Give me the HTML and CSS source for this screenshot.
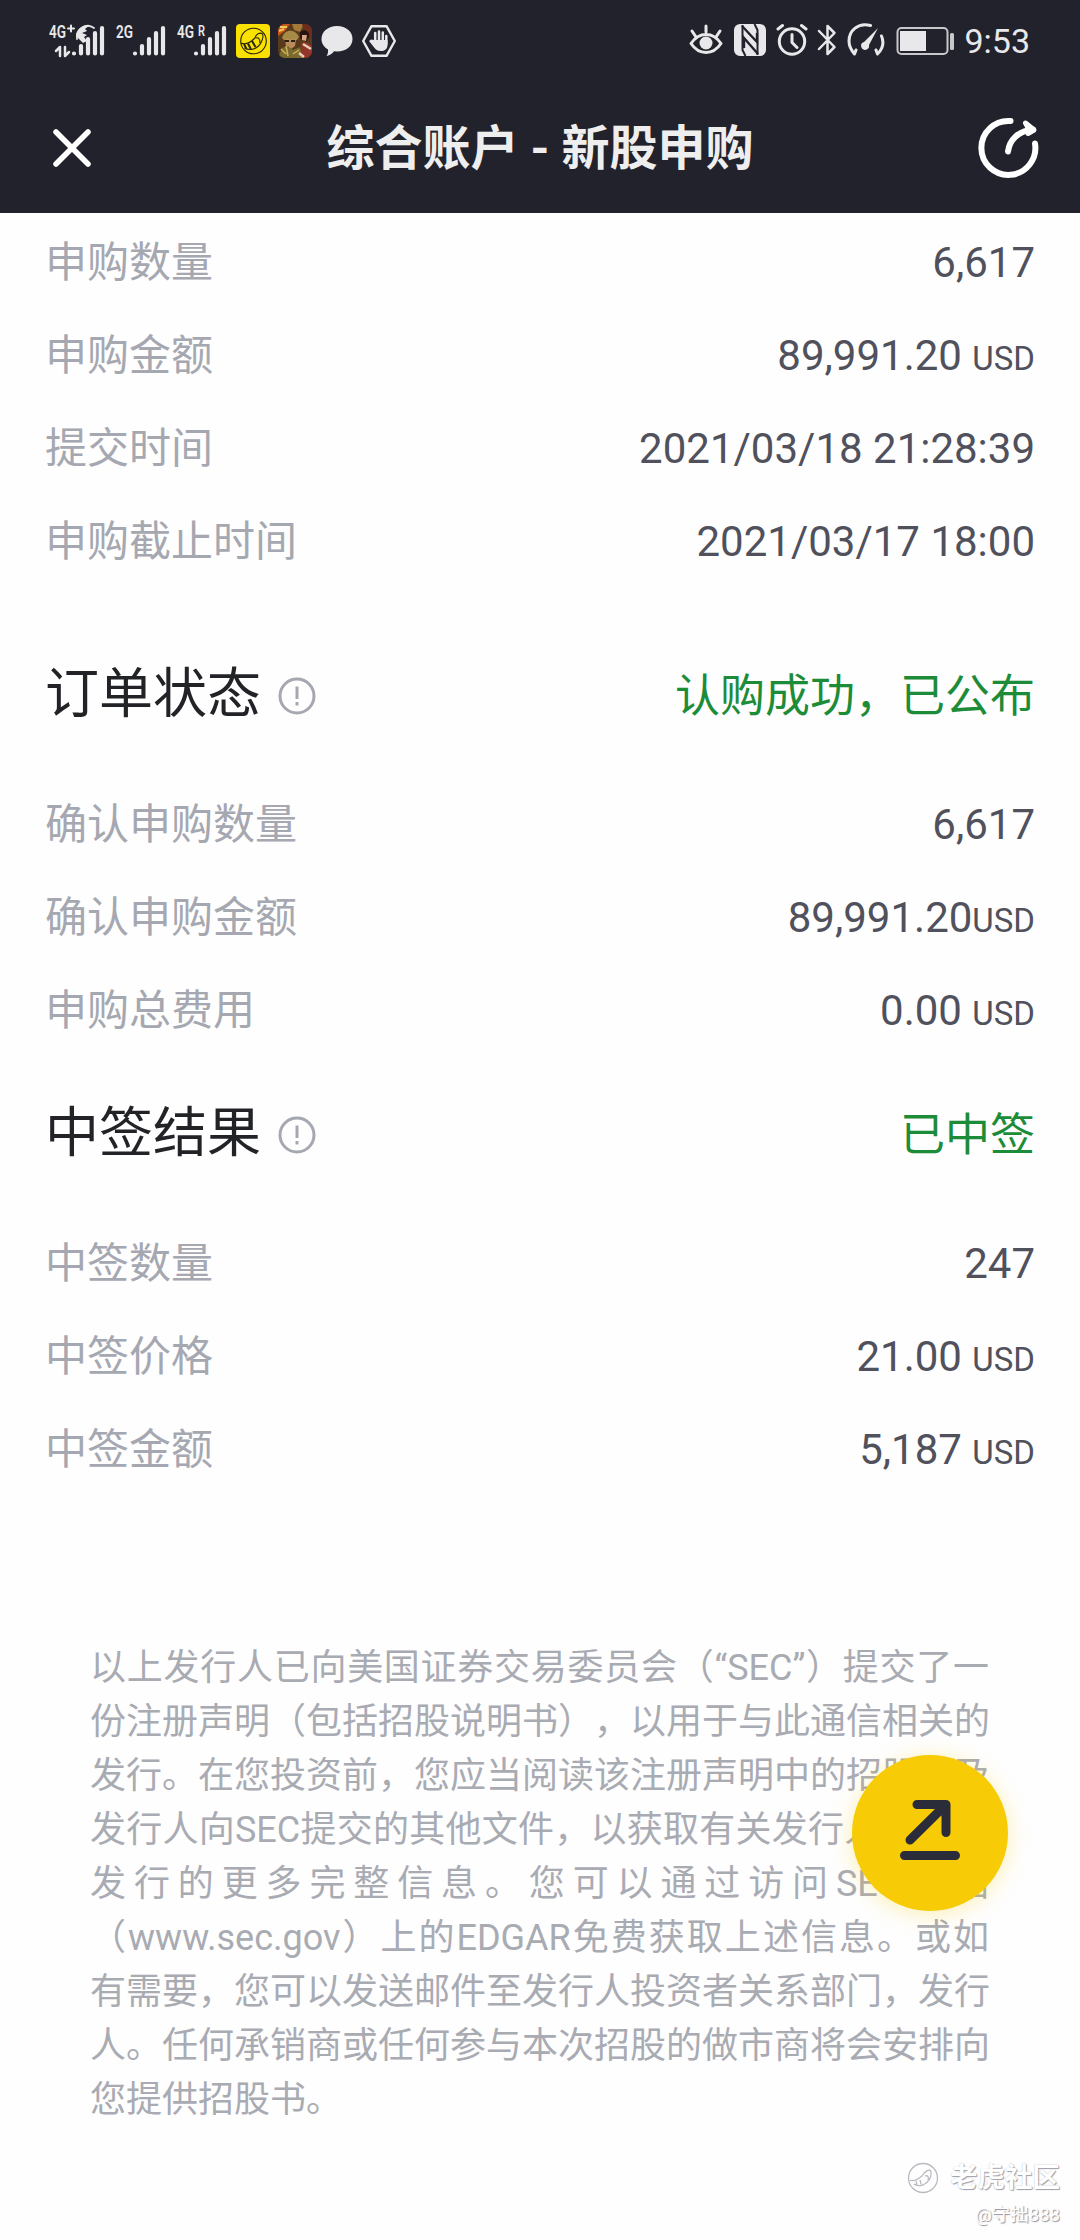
FILE: index.html
```html
<!DOCTYPE html>
<html lang="zh-CN">
<head>
<meta charset="utf-8">
<title>综合账户 - 新股申购</title>
<link rel="stylesheet" href="styles.css">
</head>
<body>
<div class="screen">
  <header class="top">
    <div class="status">
      <div class="status-left">
        <svg class="sig sig-a" width="58" height="42" viewBox="0 -4 58 42">
          <text class="net" x="0" y="14" textLength="17" lengthAdjust="spacingAndGlyphs">4G</text>
          <path class="ln" d="M19 4.500h6M22 1.500v6" stroke-width="2"/>
          <path class="fl" d="M27 12a12 12 0 0 1 14-11l-5 4 2 2-5 2 5 2-3 2 3 4-4 2-4-4z"/>
          <path class="ln" d="M28 15a11 11 0 0 1 17-11" stroke-width="1.800"/>
          <path class="ln" d="M7 27l4-4v9M16 23v9l4-4" stroke-width="2.500"/>
          <path class="ln bars" d="M25 29.500v0M32 22v7.500M39 15v14.500M46 9v20.500M53 4v25.500"/>
        </svg>
        <svg class="sig sig-b" width="52" height="42" viewBox="0 -4 52 42">
          <text class="net" x="0" y="14" textLength="17" lengthAdjust="spacingAndGlyphs">2G</text>
          <path class="ln bars" d="M19 29.500v0M26 22v7.500M33 15v14.500M40 9v20.500M47 4v25.500"/>
        </svg>
        <svg class="sig sig-c" width="52" height="42" viewBox="0 -4 52 42">
          <text class="net" x="0" y="14" textLength="17" lengthAdjust="spacingAndGlyphs">4G</text>
          <text class="net roam" x="21" y="12" textLength="7" lengthAdjust="spacingAndGlyphs">R</text>
          <path class="ln bars" d="M19 29.500v0M26 22v7.500M33 15v14.500M40 9v20.500M47 4v25.500"/>
        </svg>
        <svg class="app-tiger" width="34" height="34" viewBox="0 0 34 34">
          <rect width="34" height="34" rx="4" fill="#fae100"/>
          <g fill="none" stroke="#2a2608" stroke-width="1.100">
            <circle cx="17.500" cy="17" r="12.800"/>
            <path d="M5 19c4 2 9 0 14-5 1-4 5-6 7.500-4 1.500 3-1 9-4 12-4 4-10 4.500-14 2"/>
            <path d="M8 20l2.500 5M12 19.500l3 6M16 17l3.500 6" stroke-width="2"/>
            <path d="M20 14c3-1 4 2 4 5"/>
          </g>
        </svg>
        <svg class="app-game" width="34" height="34" viewBox="0 0 34 34">
          <defs><clipPath id="game"><rect width="34" height="34" rx="7"/></clipPath></defs>
          <g clip-path="url(#game)">
            <rect width="34" height="34" fill="#5a3a1c"/>
            <path d="M0 0h12L7 7 0 12z" fill="#c9571c"/>
            <path d="M2 3l7 0M1 7l5-2" stroke="#f1c75a" stroke-width="2"/>
            <path d="M14 0h12l-4 8-6-2z" fill="#a5793a"/>
            <path d="M24 0h10v14l-8-6z" fill="#6c2d1c"/>
            <path d="M4 14c2-9 13-10 17-1l-2 3H6z" fill="#a58b45"/>
            <path d="M7 15h11l-1 7-4 3-5-3z" fill="#b98c59"/>
            <path d="M7 16h4v2H7zM13 16h4v2h-4z" fill="#2b2016"/>
            <path d="M0 34l4-10 6-2 5 4 7-3 3 11z" fill="#7b6a2d"/>
            <path d="M3 25l5 5M15 30l6-4M8 22l2 10" stroke="#c9b25a" stroke-width="1.500"/>
            <path d="M22 8c4-4 10-1 9 5l-3 5-6-4z" fill="#29150f"/>
            <path d="M24 11l5 0-1 6-4-1z" fill="#d9a582"/>
            <path d="M23 19l5-1 6 4v12H24z" fill="#943627"/>
            <path d="M25 20l8 5M21 29l5 4" stroke="#e8cdb8" stroke-width="2.500"/>
          </g>
        </svg>
        <svg class="bubble" width="32" height="32" viewBox="0 0 32 32">
          <path class="fl" d="M16 1c9 0 15.500 5.500 15.500 13S25 26.500 16 26.500l-3-.2C11 29 8 31 5.500 31c1.500-2 1.700-4 1.500-6.500C3 22 .5 18.500.5 14 .5 6.500 7 1 16 1z"/>
        </svg>
        <svg class="hand" width="36" height="34" viewBox="0 0 36 34">
          <path class="ln" d="M10.500 2.200h15L33.800 17l-8.300 14.800h-15L2.200 17z" stroke-width="2.400"/>
          <path class="ln" d="M14.200 9v9M18 7.500v11M21.800 8.500v9M25.300 12v8" stroke-width="2.500"/>
          <path class="fl" d="M13 16h13.500v5c0 4-3 6-6.500 6-4 0-6-2-8-5l-4-5 2-1.500z"/>
        </svg>
      </div>
      <div class="status-right">
        <svg class="eye" width="34" height="34" viewBox="0 0 34 34">
          <path class="ln" d="M2 19.500c8-12 22-12 30 0-8 12-22 12-30 0zM3 7l4 6M17 2v6M31 7l-4 6" stroke-width="3"/>
          <circle class="fl" cx="17" cy="19" r="6.500"/>
        </svg>
        <svg class="nfc" width="32" height="32" viewBox="0 0 32 32">
          <rect class="fl" width="32" height="32" rx="6"/>
          <path d="M8 2l15 16V9M24 30L10 14v10" fill="none" stroke="#22222c" stroke-width="2.400"/>
          <path d="M8.500 1v25l3 6M23.500 31V6l-3-6" fill="none" stroke="#22222c" stroke-width="2"/>
        </svg>
        <svg class="alarm" width="32" height="34" viewBox="0 0 32 34">
          <circle class="ln" cx="16" cy="18.500" r="12.700" stroke-width="3"/>
          <path class="ln" d="M16 11.500v8l5 5M2 6l4.500-3.500M30 6l-4.500-3.500" stroke-width="3"/>
        </svg>
        <svg class="bt" width="20" height="34" viewBox="0 0 20 34">
          <path class="ln" d="M2 8l15.500 16-7 7V3l7 7L2 26" stroke-width="2.500"/>
        </svg>
        <svg class="gauge" width="38" height="34" viewBox="0 0 38 34">
          <path class="ln" d="M23.500 2.500C11-1 2 8 2 18c0 5 2 9 5.500 13l1.500-4M34.500 13c3 7 1 13-4 18l-1.500-4" stroke-width="3"/>
          <path class="fl" d="M31 5L22 22a4 4 0 1 1-5-3z"/>
        </svg>
        <svg class="battery" width="60" height="30" viewBox="0 0 60 30">
          <rect x="1.500" y="2" width="50" height="26" rx="4" fill="none" stroke="#c8c8cc" stroke-width="2"/>
          <rect class="fl" x="4" y="5" width="26" height="20"/>
          <rect x="54" y="7" width="4" height="17" rx="1.500" fill="#c8c8cc"/>
        </svg>
        <span class="clock">9:53</span>
      </div>
    </div>
    <nav class="bar">
      <svg class="close" width="42" height="42" viewBox="0 0 42 42"><path d="M5 5l32 32M37 5L5 37"/></svg>
      <h1 class="title">综合账户 - 新股申购</h1>
      <svg class="share" width="66" height="66" viewBox="0 0 66 66">
        <path d="M35.500 6A27 27 0 1 0 60 28.500"/>
        <path d="M33 36.500C34.500 25 43 16 58 14.500"/>
        <path class="tip" d="M50.500 8l8.500 7-6 3.500 1-4z"/>
      </svg>
    </nav>
  </header>

  <main class="content">
    <section class="rows">
      <div class="row"><span class="label">申购数量</span><span class="value">6,617</span></div>
      <div class="row"><span class="label">申购金额</span><span class="value">89,991.20 <small>USD</small></span></div>
      <div class="row"><span class="label">提交时间</span><span class="value">2021/03/18 21:28:39</span></div>
      <div class="row"><span class="label">申购截止时间</span><span class="value">2021/03/17 18:00</span></div>
    </section>

    <section class="order">
      <div class="head">
        <h2>订单状态</h2>
        <svg class="info" width="38" height="38" viewBox="0 0 38 38"><circle cx="19" cy="19" r="17"/><path d="M19 9.500v12.500M19 25v3.500"/></svg>
        <span class="state">认购成功，已公布</span>
      </div>
      <div class="row"><span class="label">确认申购数量</span><span class="value">6,617</span></div>
      <div class="row"><span class="label">确认申购金额</span><span class="value">89,991.20<small>USD</small></span></div>
      <div class="row"><span class="label">申购总费用</span><span class="value">0.00 <small>USD</small></span></div>
    </section>

    <section class="result">
      <div class="head">
        <h2>中签结果</h2>
        <svg class="info" width="38" height="38" viewBox="0 0 38 38"><circle cx="19" cy="19" r="17"/><path d="M19 9.500v12.500M19 25v3.500"/></svg>
        <span class="state">已中签</span>
      </div>
      <div class="row"><span class="label">中签数量</span><span class="value">247</span></div>
      <div class="row"><span class="label">中签价格</span><span class="value">21.00 <small>USD</small></span></div>
      <div class="row"><span class="label">中签金额</span><span class="value">5,187 <small>USD</small></span></div>
    </section>

    <p class="notice">以上发行人已向美国证券交易委员会（“SEC”）提交了一<br>份注册声明（包括招股说明书），以用于与此通信相关的<br>发行。在您投资前，您应当阅读该注册声明中的招股书及<br>发行人向SEC提交的其他文件，以获取有关发行人及本次<br>发行的更多完整信息。您可以通过访问SEC网站<br>（www.sec.gov）上的EDGAR免费获取上述信息。或如<br>有需要，您可以发送邮件至发行人投资者关系部门，发行<br>人。任何承销商或任何参与本次招股的做市商将会安排向<br><span class="last">您提供招股书。</span></p>
  </main>

  <button class="fab" aria-label="展开">
    <svg width="70" height="70" viewBox="0 0 70 70"><path d="M22 7.500h29v28M51 7.500L15 43M9.500 58.500h51"/></svg>
  </button>

  <div class="mark">
    <div class="mark-brand">
      <svg width="32" height="32" viewBox="0 0 32 32">
        <circle cx="16" cy="16" r="14.500"/>
        <path d="M3 18c3 2 7 0 12-4 3-5 8-8 9-4 1 5-3 11-8 13-4 1-7 1-9-1M9 19l1 4M13 18l1 4M18 14c3-1 4 1 3 4"/>
      </svg>
      <span>老虎社区</span>
    </div>
    <div class="mark-user">@守拙888</div>
  </div>
</div>
</body>
</html>
```
FILE: styles.css
```css
* { box-sizing: border-box; }
body {
  margin: 0;
  background: #fefefe;
  font-family: Roboto, "Noto Sans CJK SC", sans-serif;
  text-spacing-trim: space-all;
}
svg { display: block; flex: none; }
.screen {
  position: relative;
  width: 1080px;
  height: 2240px;
  overflow: hidden;
}

/* Status bar and navigation */
.top { height: 213px; background: #22222c; }
.status {
  display: flex;
  justify-content: space-between;
  height: 82px;
  padding: 0 50px 0 49px;
}
.status-left, .status-right { display: flex; align-items: center; }
.ln { fill: none; stroke: #e8e8ea; stroke-linecap: round; stroke-linejoin: round; }
.fl { fill: #e8e8ea; }
.bars { stroke-width: 4.200; }
.net { fill: #e8e8ea; font-size: 18px; font-weight: 600; }
.roam { font-size: 14px; }
.sig-a { margin-right: 9px; }
.sig-b { margin-right: 9px; }
.sig-c { margin-right: 7px; }
.app-tiger { margin-right: 8px; }
.app-game { margin-right: 9px; }
.bubble { margin-right: 8px; }
.eye { margin-right: 11px; }
.nfc { margin: -2px 10px 0 0; }
.alarm { margin: -2px 9px 0 0; }
.bt { margin: -2px 10px 0 0; }
.gauge { margin: -2px 11px 0 0; }
.battery { margin-right: 8px; }
.clock { font-size: 34px; line-height: 82px; color: #e8e8ea; }
.bar {
  display: flex;
  align-items: center;
  justify-content: space-between;
  height: 131px;
  padding: 0 39px 0 51px;
}
.close path { fill: none; stroke: #fff; stroke-width: 5.500; stroke-linecap: round; }
.title {
  margin: 2px 0 0 12px;
  font-size: 48px;
  line-height: 70px;
  font-weight: 700;
  color: #eeeeef;
}
.share path { fill: none; stroke: #fff; stroke-width: 6; stroke-linecap: round; stroke-linejoin: round; }
.share .tip { fill: #fff; stroke-width: 5; }

/* Detail rows */
.content { padding: 3px 45px 0; }
.row {
  display: flex;
  justify-content: space-between;
  height: 93px;
  font-size: 42px;
  line-height: 93px;
}
.label { color: #a6a8b1; }
.value { color: #50515c; }
.value small { font-size: 33px; }
.head {
  display: flex;
  align-items: flex-start;
  height: 90px;
  margin-bottom: 38px;
  line-height: 90px;
}
.order .head { margin-top: 62px; }
.result .head { margin-top: 32px; }
.head h2 { margin: 0; font-size: 54px; font-weight: 400; line-height: 90px; color: #222327; }
.info { align-self: center; margin: 2px 0 0 17px; }
.info circle, .info path { fill: none; stroke: #a6a8b1; stroke-width: 3; }
.state { margin: 2px 0 0 auto; font-size: 45px; color: #1d8c38; }

.notice {
  margin: 145px 46px 0 45px;
  font-size: 36px;
  line-height: 54px;
  color: #a9abb3;
  white-space: nowrap;
  text-align: justify;
  text-align-last: justify;
}
.last { display: block; text-align-last: left; }

/* Floating action */
.fab {
  position: absolute;
  left: 852px;
  top: 1755px;
  display: flex;
  align-items: center;
  justify-content: center;
  width: 156px;
  height: 156px;
  padding: 0 0 2px;
  border: 0;
  border-radius: 50%;
  background: #f7cb05;
  box-shadow: 0 3px 22px rgba(247, 203, 5, .3);
}
.fab path { fill: none; stroke: #2b2c39; stroke-width: 9; stroke-linecap: round; stroke-linejoin: round; }

/* Community signature */
.mark {
  position: absolute;
  right: 20px;
  bottom: 13px;
  display: flex;
  flex-direction: column;
  align-items: flex-end;
  color: #fff;
  text-shadow: 1px 1px 1px #9c9da8, 0 0 1px #b4b5be;
}
.mark-brand {
  display: flex;
  align-items: center;
  gap: 11px;
  font-size: 27.500px;
  font-weight: 700;
  line-height: 38px;
}
.mark-brand svg { fill: none; stroke: #b9bac2; stroke-width: 1.300; }
.mark-user {
  margin-top: 6px;
  font-size: 18.500px;
  line-height: 24px;
  text-shadow: 1px 1px 1px #8e8f9b;
}
```
